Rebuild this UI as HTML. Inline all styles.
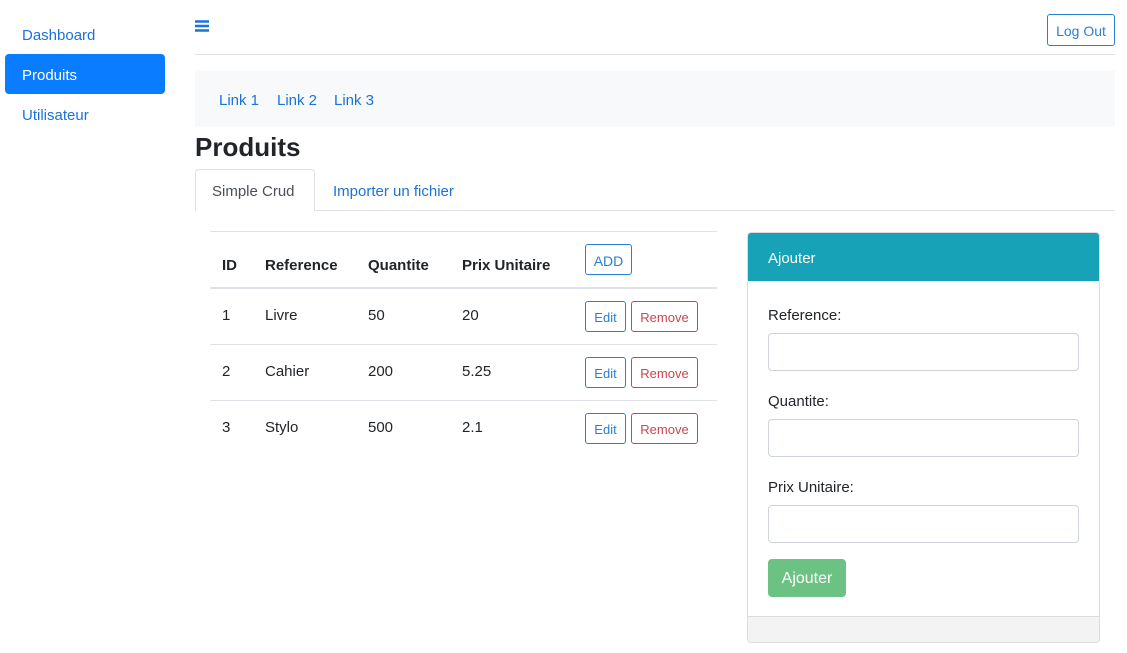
<!DOCTYPE html>
<html><head><meta charset="utf-8"><style>
*{box-sizing:border-box;margin:0;padding:0}
body{width:1127px;height:653px;background:#fff;font-family:"Liberation Sans",sans-serif;font-size:15px;color:#212529;position:relative;overflow:hidden}
.a{position:absolute;white-space:nowrap}
.t{margin-top:2px}
.blue{color:#1a73d9}
.btn{position:absolute;border:1px solid;border-radius:3px;font-size:13px;display:flex;align-items:center;justify-content:center;padding-top:2px}
.bb{border-color:#2a7fd5;color:#2a7fd5}
.br{border-color:#d0434f;color:#d0434f}
.inp{position:absolute;left:768px;width:311px;height:38px;border:1px solid #ced4da;border-radius:4px}
.hl{position:absolute;left:210px;width:507px;height:1px;background:#dee2e6}
</style></head><body>
<div class="a t blue" style="left:22px;top:25px">Dashboard</div>
<div class="a" style="left:5px;top:54px;width:160px;height:40px;background:#0a7cff;border-radius:4px"></div>
<div class="a t" style="left:22px;top:65px;color:#fff">Produits</div>
<div class="a t blue" style="left:22px;top:105px">Utilisateur</div>

<svg class="a" style="left:195px;top:19px" width="14" height="14" viewBox="0 0 14 14"><path d="M0 2.5H14M0 7H14M0 11.5H14" stroke="#1a73d9" stroke-width="2.4"/></svg>
<div class="btn bb" style="left:1047px;top:14px;width:68px;height:32px;font-size:14px">Log Out</div>
<div class="a" style="left:195px;top:54px;width:920px;height:1px;background:#dee2e6"></div>

<div class="a" style="left:195px;top:71px;width:920px;height:56px;background:#f8f9fa"></div>
<div class="a t blue" style="left:219px;top:90px">Link 1</div>
<div class="a t blue" style="left:277px;top:90px">Link 2</div>
<div class="a t blue" style="left:334px;top:90px">Link 3</div>

<div class="a t" style="left:195px;top:130px;font-size:26px;font-weight:bold">Produits</div>

<div class="a" style="left:195px;top:210px;width:920px;height:1px;background:#dee2e6"></div>
<div class="a" style="left:195px;top:169px;width:120px;height:42px;border:1px solid #dee2e6;border-bottom:none;border-radius:4px 4px 0 0;background:#fff"></div>
<div class="a t" style="left:212px;top:181px;color:#495057">Simple Crud</div>
<div class="a t blue" style="left:333px;top:181px">Importer un fichier</div>

<div class="hl" style="top:231px"></div>
<div class="a t" style="left:222px;top:255px;font-weight:bold">ID</div>
<div class="a t" style="left:265px;top:255px;font-weight:bold">Reference</div>
<div class="a t" style="left:368px;top:255px;font-weight:bold">Quantite</div>
<div class="a t" style="left:462px;top:255px;font-weight:bold">Prix Unitaire</div>
<div class="btn bb" style="left:585px;top:244px;width:47px;height:31px;font-size:14px">ADD</div>
<div class="hl" style="top:287px;height:2px"></div>

<div class="a t" style="left:222px;top:305px">1</div><div class="a t" style="left:265px;top:305px">Livre</div><div class="a t" style="left:368px;top:305px">50</div><div class="a t" style="left:462px;top:305px">20</div>
<div class="btn bb" style="left:585px;top:301px;width:41px;height:31px">Edit</div><div class="btn br" style="left:631px;top:301px;width:67px;height:31px">Remove</div>
<div class="hl" style="top:344px"></div>
<div class="a t" style="left:222px;top:361px">2</div><div class="a t" style="left:265px;top:361px">Cahier</div><div class="a t" style="left:368px;top:361px">200</div><div class="a t" style="left:462px;top:361px">5.25</div>
<div class="btn bb" style="left:585px;top:357px;width:41px;height:31px">Edit</div><div class="btn br" style="left:631px;top:357px;width:67px;height:31px">Remove</div>
<div class="hl" style="top:400px"></div>
<div class="a t" style="left:222px;top:417px">3</div><div class="a t" style="left:265px;top:417px">Stylo</div><div class="a t" style="left:368px;top:417px">500</div><div class="a t" style="left:462px;top:417px">2.1</div>
<div class="btn bb" style="left:585px;top:413px;width:41px;height:31px">Edit</div><div class="btn br" style="left:631px;top:413px;width:67px;height:31px">Remove</div>

<div class="a" style="left:747px;top:232px;width:353px;height:411px;border:1px solid #dcdcdc;border-radius:4px;overflow:hidden">
 <div style="height:48px;background:#17a2b8"></div>
 <div style="position:absolute;left:0;right:0;bottom:0;height:26px;background:#f3f3f3;border-top:1px solid #dcdcdc"></div>
</div>
<div class="a t" style="left:768px;top:248px;color:#fff">Ajouter</div>
<div class="a t" style="left:768px;top:305px">Reference:</div>
<div class="inp" style="top:333px"></div>
<div class="a t" style="left:768px;top:391px">Quantite:</div>
<div class="inp" style="top:419px"></div>
<div class="a t" style="left:768px;top:477px">Prix Unitaire:</div>
<div class="inp" style="top:505px"></div>
<div class="a" style="left:768px;top:559px;width:78px;height:38px;background:#6cc283;border-radius:4px;color:#fff;display:flex;align-items:center;justify-content:center;font-size:16px;padding-top:2px">Ajouter</div>
</body></html>
